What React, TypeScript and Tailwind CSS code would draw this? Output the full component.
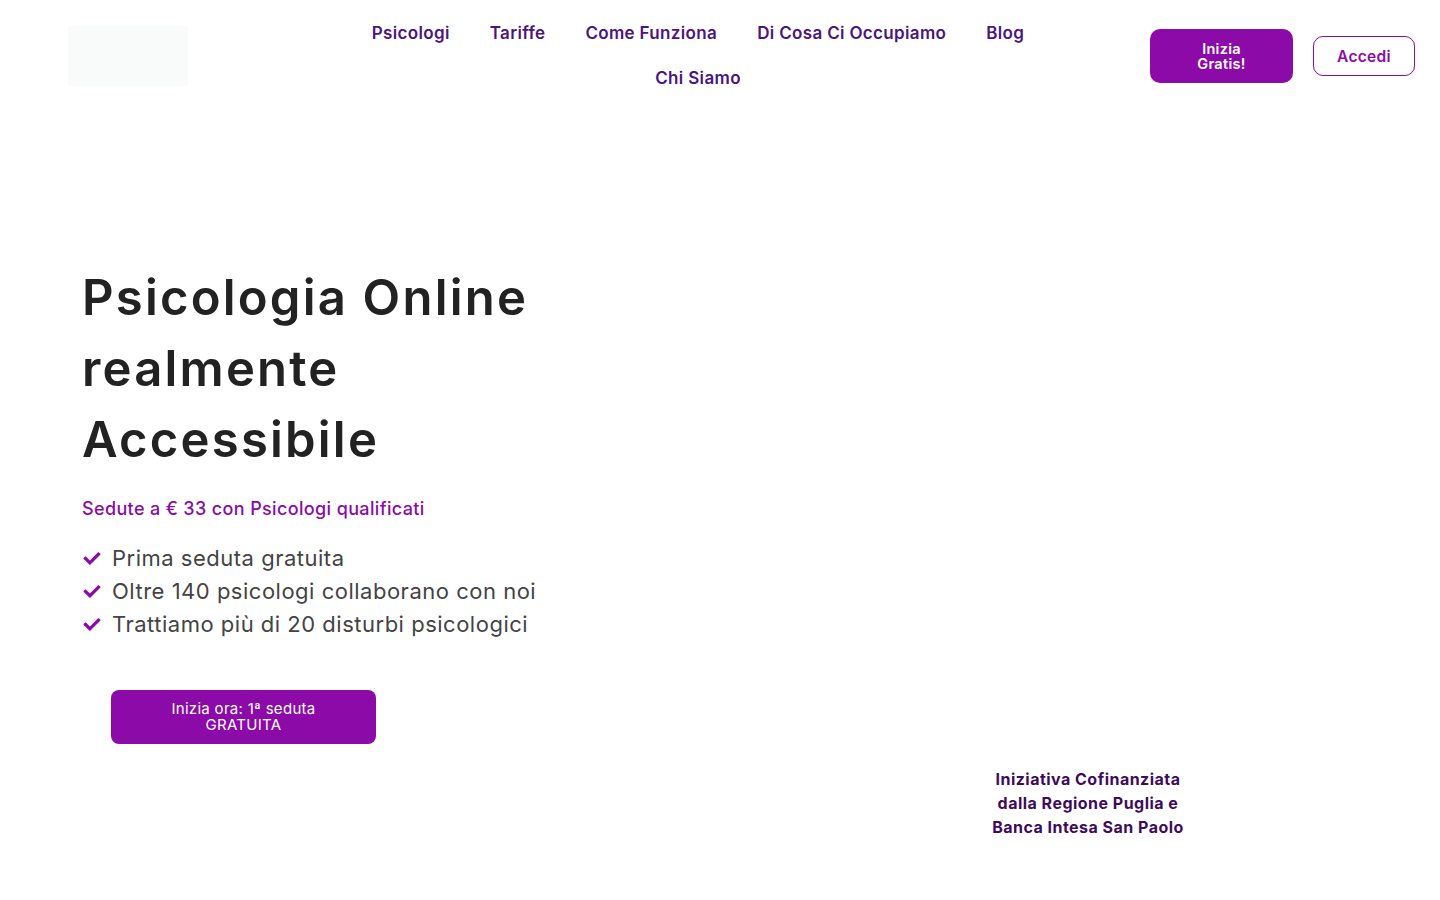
import { FaCheck } from "react-icons/fa"

const navItems = ["Psicologi", "Tariffe", "Come Funziona", "Di Cosa Ci Occupiamo", "Blog", "Chi Siamo"]

const features = [
  "Prima seduta gratuita",
  "Oltre 140 psicologi collaborano con noi",
  "Trattiamo più di 20 disturbi psicologici",
]

const Header = () => (
  <header className="flex h-[112px] items-center pl-[68px] pr-[25px]">
    <div className="h-[60px] w-[120px] bg-[#f9fafa]" />
    <nav className="ml-[140px] w-[740px]">
      <ul className="flex flex-wrap justify-center">
        {navItems.map((item) => (
          <li key={item}>
            <a
              href="#"
              className="block px-5 py-[10px] text-[17px] leading-[25px] font-semibold tracking-[0.02em] text-[#4b1480]"
            >
              {item}
            </a>
          </li>
        ))}
      </ul>
    </nav>
    <div className="ml-auto flex items-center gap-5">
      <button className="h-[54px] w-[143px] rounded-[10px] bg-[#8b0aa8] text-[14.5px] leading-[15px] font-semibold tracking-[0.02em] text-white">
        Inizia
        <br />
        Gratis!
      </button>
      <button className="h-[40px] w-[102px] rounded-[10px] border border-[#8b0aa8] bg-white pt-[2px] text-[15.5px] font-semibold tracking-[0.02em] text-[#8b0aa8]">
        Accedi
      </button>
    </div>
  </header>
)

export default function App() {
  return (
    <div className="min-h-[7800px] bg-white font-['Inter','Open_Sans',sans-serif]">
      <Header />
      <section className="flex pt-[150px] pl-[82px]">
        <div className="w-[560px]">
          <h1 className="text-[49px] leading-[71px] font-semibold tracking-[0.045em] text-[#222222]">
            Psicologia Online
            <br />
            realmente
            <br />
            Accessibile
          </h1>
          <p className="mt-[20px] text-[18px] leading-[27px] font-medium tracking-[0.02em] text-[#8b0aa8]">
            Sedute a € 33 con Psicologi qualificati
          </p>
          <ul className="mt-[20px]">
            {features.map((f) => (
              <li
                key={f}
                className="flex items-center text-[22px] leading-[33px] tracking-[0.023em] text-[#444444]"
              >
                <FaCheck className="mr-[10px] h-[17px] w-[20px] text-[#8b0aa8]" />
                {f}
              </li>
            ))}
          </ul>
          <button className="mt-[49px] ml-[29px] h-[54px] w-[265px] rounded-[8px] bg-[#8b0aa8] text-[15px] leading-[16px] tracking-[0.02em] text-white">
            Inizia ora: 1ª seduta
            <br />
            GRATUITA
          </button>
        </div>
        <div className="mr-[152px] ml-auto flex w-[400px] flex-col">
          <div className="h-[505px]" />
          <p className="text-center text-[16px] leading-[24px] font-bold tracking-[0.03em] text-[#3d0c5c]">
            Iniziativa Cofinanziata
            <br />
            dalla Regione Puglia e
            <br />
            Banca Intesa San Paolo
          </p>
        </div>
      </section>
    </div>
  )
}
